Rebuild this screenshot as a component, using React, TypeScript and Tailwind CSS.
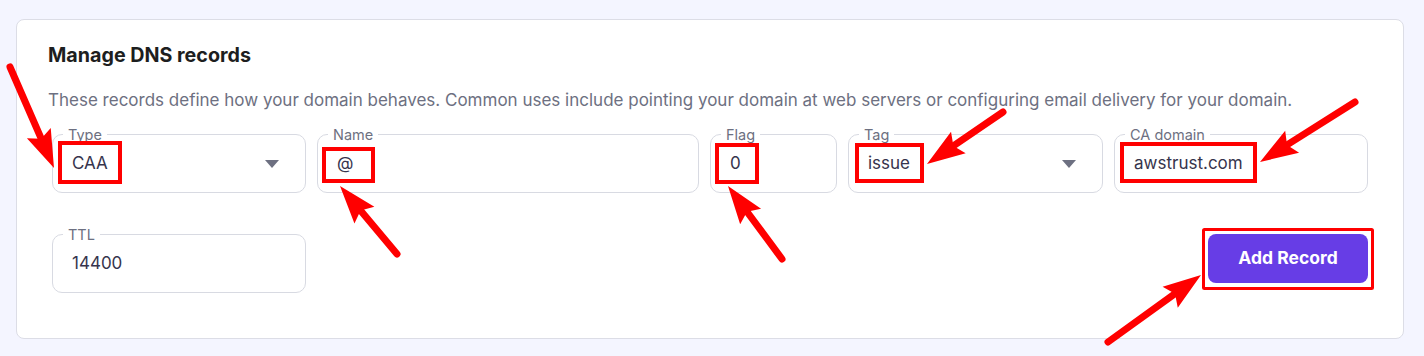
import React from "react";

const FONT = { fontFamily: 'Inter, "Noto Sans", sans-serif' };

function Caret() {
  return (
    <svg width="14" height="8" viewBox="0 0 14 8" className="shrink-0">
      <path d="M0 0 L14 0 L7 8 Z" fill="#6d7081" />
    </svg>
  );
}

function Field({
  label,
  value,
  w,
  select,
}: {
  label: string;
  value: string;
  w: string;
  select?: boolean;
}) {
  return (
    <div
      className={`relative h-[59px] ${w} shrink-0 rounded-[10px] border border-[#d8dae2] bg-white flex items-center justify-between pl-[19px] pr-[26px]`}
    >
      <span className="absolute left-[10px] top-0 -translate-y-1/2 bg-white px-[5px] text-[14.5px] leading-[16px] text-[#6d7081]">
        {label}
      </span>
      <span className="text-[17px] text-[#36344d]">{value}</span>
      {select && <Caret />}
    </div>
  );
}

type Pt = [number, number];

function Arrow({ tail, tip }: { tail: Pt; tip: Pt }) {
  const dx = tip[0] - tail[0];
  const dy = tip[1] - tail[1];
  const len = Math.hypot(dx, dy);
  const ux = dx / len;
  const uy = dy / len;
  const hl = 38;
  const hw = 13;
  const bx = tip[0] - ux * hl;
  const by = tip[1] - uy * hl;
  const nx = -uy;
  const ny = ux;
  const lx = tip[0] - ux * (hl - 6);
  const ly = tip[1] - uy * (hl - 6);
  return (
    <g>
      <line
        x1={tail[0]}
        y1={tail[1]}
        x2={lx}
        y2={ly}
        stroke="#ff0000"
        strokeWidth={7}
        strokeLinecap="round"
      />
      <polygon
        points={`${tip[0]},${tip[1]} ${bx + nx * hw},${by + ny * hw} ${lx},${ly} ${bx - nx * hw},${by - ny * hw}`}
        fill="#ff0000"
      />
    </g>
  );
}

export default function App() {
  return (
    <div
      className="relative w-[1424px] h-[356px] overflow-hidden bg-[#f4f5ff] pt-[19px] pl-[16px]"
      style={FONT}
    >
      <div className="w-[1388px] h-[320px] rounded-[8px] border border-[#dcdde6] bg-white pt-[23px] pl-[31px]">
        <h2 className="text-[19.7px] leading-[24px] font-bold text-[#1d1e20]">
          Manage DNS records
        </h2>
        <p className="mt-[21px] text-[17px] leading-[24px] text-[#6d7081]">
          These records define how your domain behaves. Common uses include
          pointing your domain at web servers or configuring email delivery for
          your domain.
        </p>
        <div className="ml-[4px] mt-[22px] flex gap-[11px]">
          <Field label="Type" value="CAA" w="w-[254px]" select />
          <Field label="Name" value="@" w="w-[382px]" />
          <Field label="Flag" value="0" w="w-[127px]" />
          <Field label="Tag" value="issue" w="w-[255px]" select />
          <Field label="CA domain" value="awstrust.com" w="w-[254px]" />
        </div>
        <div className="ml-[4px] mt-[41px] flex w-[1316px] items-start justify-between">
          <Field label="TTL" value="14400" w="w-[254px]" />
          <button className="h-[49px] w-[160px] rounded-[8px] bg-[#673de6] text-[17.5px] font-bold text-white">
            Add Record
          </button>
        </div>
      </div>

      <svg
        className="pointer-events-none absolute left-0 top-0"
        width="1424"
        height="356"
        viewBox="0 0 1424 356"
      >
        <g fill="none" stroke="#ff0000" strokeWidth={4}>
          <rect x={60} y={143} width={60} height={39} />
          <rect x={324} y={149} width={49} height={32} />
          <rect x={717} y={145} width={40} height={37} />
          <rect x={857} y={145} width={65} height={36} />
          <rect x={1122} y={144} width={133} height={37} />
        </g>
        <rect
          x={1203.5}
          y={229.5}
          width={169}
          height={59}
          fill="none"
          stroke="#ff0000"
          strokeWidth={3}
          rx={1}
        />
        <Arrow tail={[10, 67]} tip={[54, 168]} />
        <Arrow tail={[397, 254]} tip={[340, 186]} />
        <Arrow tail={[782, 259]} tip={[728, 186]} />
        <Arrow tail={[1003, 112]} tip={[927, 164]} />
        <Arrow tail={[1355, 102]} tip={[1260, 162]} />
        <Arrow tail={[1108, 342]} tip={[1201, 275]} />
      </svg>
    </div>
  );
}
